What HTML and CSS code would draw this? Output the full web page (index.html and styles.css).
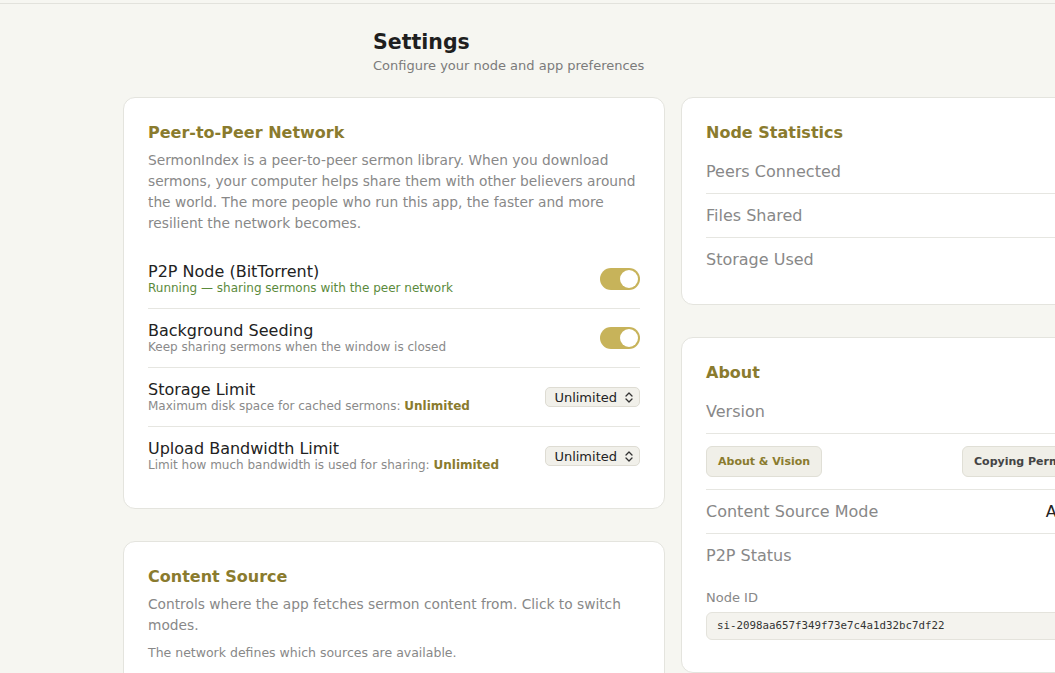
FILE: index.html
```html
<!DOCTYPE html>
<html lang="en">
<head>
<meta charset="utf-8">
<title>Settings</title>
<link rel="stylesheet" href="styles.css">
</head>
<body>
<div class="topbar"></div>
<main class="page">
  <header class="page-head">
    <h1 class="page-title">Settings</h1>
    <p class="page-sub">Configure your node and app preferences</p>
  </header>
  <div class="columns">
    <div class="col">
      <section class="card">
        <h2 class="card-title">Peer-to-Peer Network</h2>
        <p class="card-desc">SermonIndex is a peer-to-peer sermon library. When you download sermons, your computer helps share them with other believers around the world. The more people who run this app, the faster and more resilient the network becomes.</p>
        <div class="setting">
          <div class="setting-text">
            <div class="setting-label">P2P Node (BitTorrent)</div>
            <div class="setting-sub ok">Running — sharing sermons with the peer network</div>
          </div>
          <span class="toggle on"><span class="knob"></span></span>
        </div>
        <div class="setting">
          <div class="setting-text">
            <div class="setting-label">Background Seeding</div>
            <div class="setting-sub">Keep sharing sermons when the window is closed</div>
          </div>
          <span class="toggle on"><span class="knob"></span></span>
        </div>
        <div class="setting">
          <div class="setting-text">
            <div class="setting-label">Storage Limit</div>
            <div class="setting-sub">Maximum disk space for cached sermons: <b class="hl">Unlimited</b></div>
          </div>
          <span class="select">Unlimited
            <svg class="chev" width="8" height="11" viewBox="0 0 8 11"><path d="M1 4 L4 1 L7 4 M1 7 L4 10 L7 7" fill="none" stroke="#333" stroke-width="1.3" stroke-linecap="round" stroke-linejoin="round"/></svg>
          </span>
        </div>
        <div class="setting last">
          <div class="setting-text">
            <div class="setting-label">Upload Bandwidth Limit</div>
            <div class="setting-sub">Limit how much bandwidth is used for sharing: <b class="hl">Unlimited</b></div>
          </div>
          <span class="select">Unlimited
            <svg class="chev" width="8" height="11" viewBox="0 0 8 11"><path d="M1 4 L4 1 L7 4 M1 7 L4 10 L7 7" fill="none" stroke="#333" stroke-width="1.3" stroke-linecap="round" stroke-linejoin="round"/></svg>
          </span>
        </div>
      </section>

      <section class="card">
        <h2 class="card-title">Content Source</h2>
        <p class="card-desc">Controls where the app fetches sermon content from. Click to switch modes.</p>
        <p class="card-note">The network defines which sources are available.</p>
      </section>
    </div>

    <div class="col">
      <section class="card card-stats">
        <h2 class="card-title tight">Node Statistics</h2>
        <div class="stat"><span class="stat-label">Peers Connected</span></div>
        <div class="stat"><span class="stat-label">Files Shared</span></div>
        <div class="stat last"><span class="stat-label">Storage Used</span></div>
      </section>

      <section class="card">
        <h2 class="card-title tight">About</h2>
        <div class="stat"><span class="stat-label">Version</span></div>
        <div class="btn-row">
          <span class="btn gold">About &amp; Vision</span>
          <span class="btn">Copying Permissions</span>
        </div>
        <div class="stat"><span class="stat-label">Content Source Mode</span><span class="stat-val mode">Auto</span></div>
        <div class="stat last"><span class="stat-label">P2P Status</span></div>
        <div class="node-id">
          <div class="node-label">Node ID</div>
          <div class="node-box">si-2098aa657f349f73e7c4a1d32bc7df22</div>
        </div>
      </section>
    </div>
  </div>
</main>
</body>
</html>
```

FILE: styles.css
```css
html, body {
  margin: 0;
  padding: 0;
}
body {
  background: #f6f6f1;
  font-family: "DejaVu Sans", Verdana, sans-serif;
  color: #222;
  overflow: hidden;
  width: 1055px;
  height: 673px;
}
.topbar {
  height: 3px;
  border-bottom: 1px solid #e2e2dc;
}
.page {
  padding-left: 123px;
}
.page-head {
  padding-left: 250px;
  padding-top: 25px;
}
.page-title {
  margin: 0;
  font-size: 20.5px;
  line-height: 26px;
  font-weight: bold;
  color: #1f1f1f;
}
.page-sub {
  margin: 2px 0 0;
  font-size: 13px;
  line-height: 18px;
  color: #7b7b7b;
}
.columns {
  display: grid;
  grid-template-columns: 542px 542px;
  column-gap: 16px;
  margin-top: 22px;
  align-items: start;
}
.col {
  display: flex;
  flex-direction: column;
  gap: 32px;
}
.card {
  background: #fff;
  border: 1px solid #e4e4de;
  border-radius: 12px;
  padding: 24px;
}
.card-stats {
  padding-bottom: 23px;
}
.card-title {
  margin: 0;
  font-size: 16px;
  line-height: 22px;
  font-weight: bold;
  color: #8a7b2e;
}
.card-title.tight {
  margin-bottom: 6px;
}
.card-desc {
  margin: 6px 0 0;
  font-size: 13.75px;
  line-height: 21px;
  color: #888;
}
.card-note {
  margin: 7px 0 0;
  font-size: 12.5px;
  line-height: 20px;
  color: #888;
}
.setting {
  display: flex;
  align-items: center;
  justify-content: space-between;
  padding: 13px 0;
  border-bottom: 1px solid #e6e6e1;
}
.card-desc + .setting {
  margin-top: 16px;
}
.setting.last {
  border-bottom: none;
  padding-bottom: 12px;
}
.setting-label {
  font-size: 16px;
  line-height: 18px;
  color: #222;
}
.setting-sub {
  font-size: 12px;
  line-height: 14px;
  color: #8a8a8a;
}
.setting-sub.ok {
  color: #5b8a3c;
}
.hl {
  color: #8a7b2e;
  font-weight: bold;
}
.toggle {
  width: 40px;
  height: 22px;
  border-radius: 11px;
  background: #c7b35a;
  position: relative;
  flex: none;
}
.toggle .knob {
  position: absolute;
  top: 2px;
  right: 2px;
  width: 18px;
  height: 18px;
  border-radius: 50%;
  background: #fff;
}
.select {
  display: inline-flex;
  align-items: center;
  gap: 8px;
  height: 20px;
  box-sizing: border-box;
  padding: 0 6px 0 8px;
  font-size: 13px;
  color: #222;
  background: #f1f0ea;
  border: 1px solid #dedcd3;
  border-radius: 5px;
  flex: none;
}
.chev {
  display: block;
}
.stat {
  display: flex;
  justify-content: space-between;
  padding: 10px 0;
  line-height: 23px;
  font-size: 16px;
  border-bottom: 1px solid #e6e6e1;
}
.stat.last {
  border-bottom: none;
}
.stat-label {
  color: #888;
}
.stat-val {
  color: #222;
}
.stat-val.mode {
  margin-right: 115px;
}
.btn-row {
  display: grid;
  grid-template-columns: 1fr 1fr;
  column-gap: 20px;
  justify-items: start;
  padding: 12px 0;
  border-bottom: 1px solid #e6e6e1;
}
.btn {
  display: inline-block;
  height: 31px;
  box-sizing: border-box;
  padding: 0 11px;
  line-height: 29px;
  font-size: 11px;
  font-weight: bold;
  color: #444;
  background: #f0efe8;
  border: 1px solid #e0dfd6;
  border-radius: 6px;
  white-space: nowrap;
}
.btn.gold {
  color: #8a7b2e;
}
.node-id {
  padding: 12px 0 8px;
}
.node-label {
  font-size: 13px;
  line-height: 18px;
  color: #888;
}
.node-box {
  margin-top: 5px;
  padding: 5px 10px;
  line-height: 16px;
  font-family: "DejaVu Sans Mono", "Liberation Mono", monospace;
  font-size: 10.8px;
  color: #333;
  background: #f4f3ee;
  border: 1px solid #e4e3dc;
  border-radius: 6px;
}
```
